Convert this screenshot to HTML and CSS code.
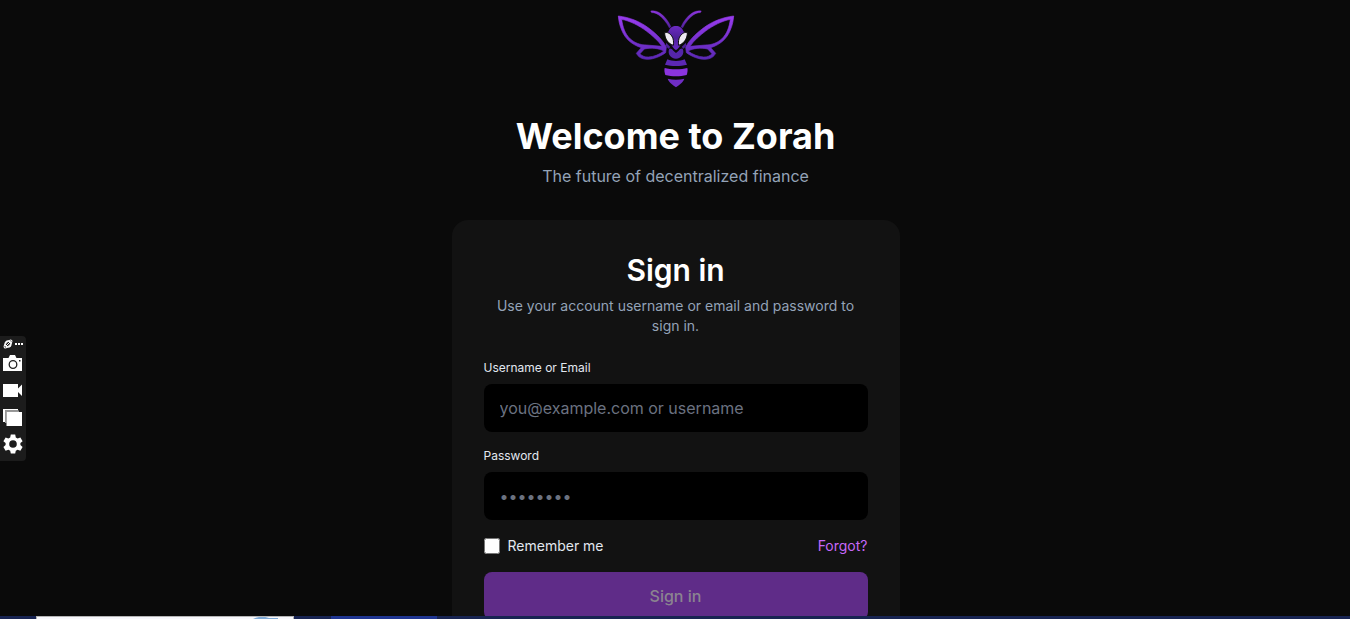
FILE: index.html
```html
<!DOCTYPE html>
<html lang="en">
<head>
<meta charset="utf-8">
<meta name="viewport" content="width=device-width, initial-scale=1">
<title>Zorah – Sign in</title>
<link rel="stylesheet" href="styles.css">
</head>
<body>
<main class="page">
  <header class="intro">
    <svg class="logo" viewBox="0 0 420 288" role="img" aria-label="Zorah">
      <defs>
        <linearGradient id="wing" gradientUnits="userSpaceOnUse" x1="0" y1="47" x2="0" y2="180">
          <stop offset="0" stop-color="#9a3cf0"/>
          <stop offset="1" stop-color="#5a28b4"/>
        </linearGradient>
        <linearGradient id="antenna" x1="0" y1="0" x2="0" y2="1">
          <stop offset="0" stop-color="#8c35de"/>
          <stop offset="1" stop-color="#4f219a"/>
        </linearGradient>
        <linearGradient id="head" x1="0" y1="0" x2="0" y2="1">
          <stop offset="0" stop-color="#6c2bc2"/>
          <stop offset="0.5" stop-color="#4c2097"/>
          <stop offset="1" stop-color="#6a2bc6"/>
        </linearGradient>
        <g id="side">
          <path fill="url(#antenna)" stroke="url(#antenna)" stroke-width="1" d="M134 33C144 31 155 34 163 40C176 49 187 63 195 80L190 84C181 66 169 53 158 45C150 39 143 38 137 38Z"/>
          <path fill="url(#wing)" stroke="url(#wing)" stroke-width="2" fill-rule="evenodd" d="M37 48C70 52 102 64 129 85C153 103 170 121 181 141L179 158C162 170 143 178 123 178C106 177 97 171 91 160L106 143C77 134 57 116 47 90C40 74 38 60 37 48ZM47 58C50 81 57 102 73 117C87 129 103 135 121 135L168 139C156 121 139 107 121 93C98 76 72 63 47 58ZM115 147L102 161C108 168 116 171 127 171C145 170 161 163 174 153C158 145 137 142 115 147Z"/>
        </g>
      </defs>
      <use href="#side"/>
      <use href="#side" transform="matrix(-1 0 0 1 420 0)"/>
      <path fill="url(#head)" d="M188 94C191 83 200 78 210 78C220 78 229 83 232 94L240 99C235 112 228 124 224 134C220 142 215 147 210 150C205 147 200 142 196 134C192 124 185 112 180 99Z"/>
      <path fill="#4c2097" d="M180 128L193 141L187 146L180 138ZM240 128L227 141L233 146L240 138Z"/>
      <path fill="#eeeaf2" stroke="#0a0a0a" stroke-width="3" d="M176 97C188 96 197 104 201 116C203 123 203 130 202 136C189 132 175 118 176 97ZM244 97C232 96 223 104 219 116C217 123 217 130 218 136C231 132 245 118 244 97Z"/>
      <path fill="#5426a9" d="M190 146C195 145 199 148 202 152L210 159L218 152C221 148 225 145 230 146C237 160 226 176 210 176C194 176 183 160 190 146Z"/>
      <path fill="#5c28b4" d="M184 178C192 181 199 183 210 183C221 183 228 181 236 178L243 194C224 199 196 199 177 194Z"/>
      <path fill="#8b34df" d="M176 204C194 209 226 209 244 204C246 211 244 219 242 225C222 230 198 230 178 225C176 218 174 211 176 204Z"/>
      <path fill="#6f2dc4" d="M185 236C202 240 218 240 235 236C231 248 218 255 210 262C202 255 189 248 185 236Z"/>
    </svg>
    <h1 class="title">Welcome to Zorah</h1>
    <p class="tagline">The future of decentralized finance</p>
  </header>

  <form class="card">
    <h2 class="card-title">Sign in</h2>
    <p class="card-text">Use your account username or email and password to sign in.</p>
    <div class="field">
      <label class="label" for="user">Username or Email</label>
      <input class="input" id="user" type="text" placeholder="you@example.com or username">
    </div>
    <div class="field">
      <label class="label" for="password">Password</label>
      <input class="input" id="password" type="password" placeholder="••••••••">
    </div>
    <div class="options">
      <label class="remember" for="remember"><input class="check" id="remember" type="checkbox">Remember me</label>
      <a class="forgot" href="#">Forgot?</a>
    </div>
    <button class="submit" type="submit" disabled>Sign in</button>
  </form>
</main>

<aside class="capture" aria-label="Capture tools">
  <div class="capture-head">
    <svg width="10" height="10" viewBox="0 0 10 10" aria-hidden="true">
      <ellipse cx="5" cy="5" rx="5" ry="2" transform="rotate(-45 5 5)" fill="none" stroke="#fff"/>
      <circle cx="5" cy="5" r="3" fill="none" stroke="#fff" stroke-width="1.300"/>
      <path d="M3 7L7 3" stroke="#fff"/>
    </svg>
    <svg width="8" height="10" viewBox="0 0 8 10" aria-hidden="true"><path d="M0 4h2v2H0zM3 4h2v2H3zM6 4h2v2H6z" fill="#fff"/></svg>
  </div>
  <button class="tool" type="button" aria-label="Screenshot">
    <svg width="20" height="20" viewBox="0 0 20 20"><path fill="#fff" d="M0 5H5.500l1.500-3h5L13.500 5H19v13H0z"/><circle cx="10" cy="11.500" r="3.800" fill="#fff" stroke="#222" stroke-width="1.300"/><path fill="#222" d="M16 7h1.500v1.500H16z"/></svg>
  </button>
  <button class="tool" type="button" aria-label="Record video">
    <svg width="20" height="20" viewBox="0 0 20 20"><path fill="#fff" d="M0 4H15v4.500l4-4v11.500L15 12v5H0z"/></svg>
  </button>
  <button class="tool" type="button" aria-label="Gallery">
    <svg width="20" height="20" viewBox="0 0 20 20"><path fill="#fff" d="M0 2h15v1.500H2v11.500H0z"/><path fill="#999" d="M2 3.500h14V5H3.500v11H2z"/><path fill="#fff" d="M3.500 5H19v14H3.500z"/></svg>
  </button>
  <button class="tool" type="button" aria-label="Settings">
    <svg width="20" height="20" viewBox="0 0 20 20"><path fill="#fff" fill-rule="evenodd" d="M7.800.5h4.400l.6 2.900 1.800 1 2.800-1 2.200 3.800-2.200 1.900v1.900l2.200 1.900-2.200 3.800-2.800-1-1.800 1-.6 2.800H7.800l-.6-2.800-1.800-1-2.800 1L.4 12.900 2.600 11V9.100L.4 7.200l2.200-3.800 2.800 1 1.800-1zM10 6.200a3.800 3.800 0 1 0 0 7.600a3.800 3.800 0 1 0 0-7.600z"/></svg>
  </button>
</aside>

<div class="taskbar">
  <div class="window-edge">
    <svg width="26" height="2" viewBox="0 0 26 2" aria-hidden="true"><path d="M0 2Q8-2 16 1H25V2Z" fill="#7ea9d6"/></svg>
  </div>
  <div class="active-task"></div>
</div>
</body>
</html>
```
FILE: styles.css
```css
* {
  box-sizing: border-box;
}

body {
  margin: 0;
  height: 100vh;
  overflow: hidden;
  background: #0a0a0a;
  color: #fff;
  font-family: Inter, "Liberation Sans", sans-serif;
}

h1, h2, p {
  margin: 0;
}

.page {
  display: flex;
  flex-direction: column;
  align-items: center;
  gap: 32px;
  height: 100%;
  overflow-y: auto;
  scrollbar-width: none;
  padding-left: 1px;
}

.intro {
  display: flex;
  flex: none;
  flex-direction: column;
  align-items: center;
  text-align: center;
}

.logo {
  display: block;
  width: 140px;
  height: 96px;
  margin-bottom: 20px;
}

.title {
  margin-bottom: 8px;
  font-size: 36px;
  line-height: 40px;
  font-weight: 700;
}

.tagline {
  color: #94a3b8;
  font-size: 16px;
  line-height: 24px;
}

.card {
  display: flex;
  flex: none;
  flex-direction: column;
  gap: 16px;
  width: 100%;
  max-width: 448px;
  padding: 32px;
  border-radius: 16px;
  background: #121212;
}

.card-title {
  margin-bottom: -8px;
  font-size: 30px;
  line-height: 36px;
  font-weight: 600;
  text-align: center;
}

.card-text {
  margin-bottom: 8px;
  color: #94a3b8;
  font-size: 14px;
  line-height: 20px;
  text-align: center;
}

.field {
  display: flex;
  flex-direction: column;
  gap: 8px;
}

.label {
  color: #e2e8f0;
  font-size: 12px;
  line-height: 16px;
}

.input {
  width: 100%;
  height: 48px;
  padding: 0 16px;
  border: 0;
  border-radius: 8px;
  background: #000;
  color: #fff;
  font: 16px/24px Inter, "Liberation Sans", sans-serif;
}

.input::placeholder {
  color: #6b7280;
}

.options {
  display: flex;
  align-items: center;
  justify-content: space-between;
  font-size: 14px;
  line-height: 20px;
}

.remember {
  display: flex;
  align-items: center;
  gap: 8px;
  color: #e2e8f0;
}

.check {
  width: 16px;
  height: 16px;
  margin: 0;
}

.forgot {
  color: #c668fa;
  text-decoration: none;
}

.submit {
  height: 48px;
  border: 0;
  border-radius: 8px;
  background: #5f2c88;
  color: #8b8490;
  font: 500 16px/24px Inter, "Liberation Sans", sans-serif;
}

.capture {
  position: fixed;
  left: 0;
  top: 336px;
  display: flex;
  flex-direction: column;
  align-items: center;
  gap: 7px;
  width: 26px;
  padding: 3px 0 7px;
  border-radius: 0 4px 4px 0;
  background: #1c1c1c;
}

.capture-head {
  display: flex;
  gap: 2px;
  margin-bottom: -3px;
}

.capture-head svg,
.tool svg {
  display: block;
}

.tool {
  padding: 0;
  border: 0;
  background: none;
}

.taskbar {
  position: fixed;
  left: 0;
  right: 0;
  bottom: 0;
  display: flex;
  height: 3px;
  padding-left: 36px;
  background: #182452;
}

.window-edge {
  display: flex;
  justify-content: flex-end;
  width: 258px;
  margin-right: 37px;
  padding-right: 14px;
  border: 1px solid #b5b5b5;
  border-bottom: 0;
  background: #f8f8fc;
}

.active-task {
  width: 106px;
  background: #1f3591;
}
```
